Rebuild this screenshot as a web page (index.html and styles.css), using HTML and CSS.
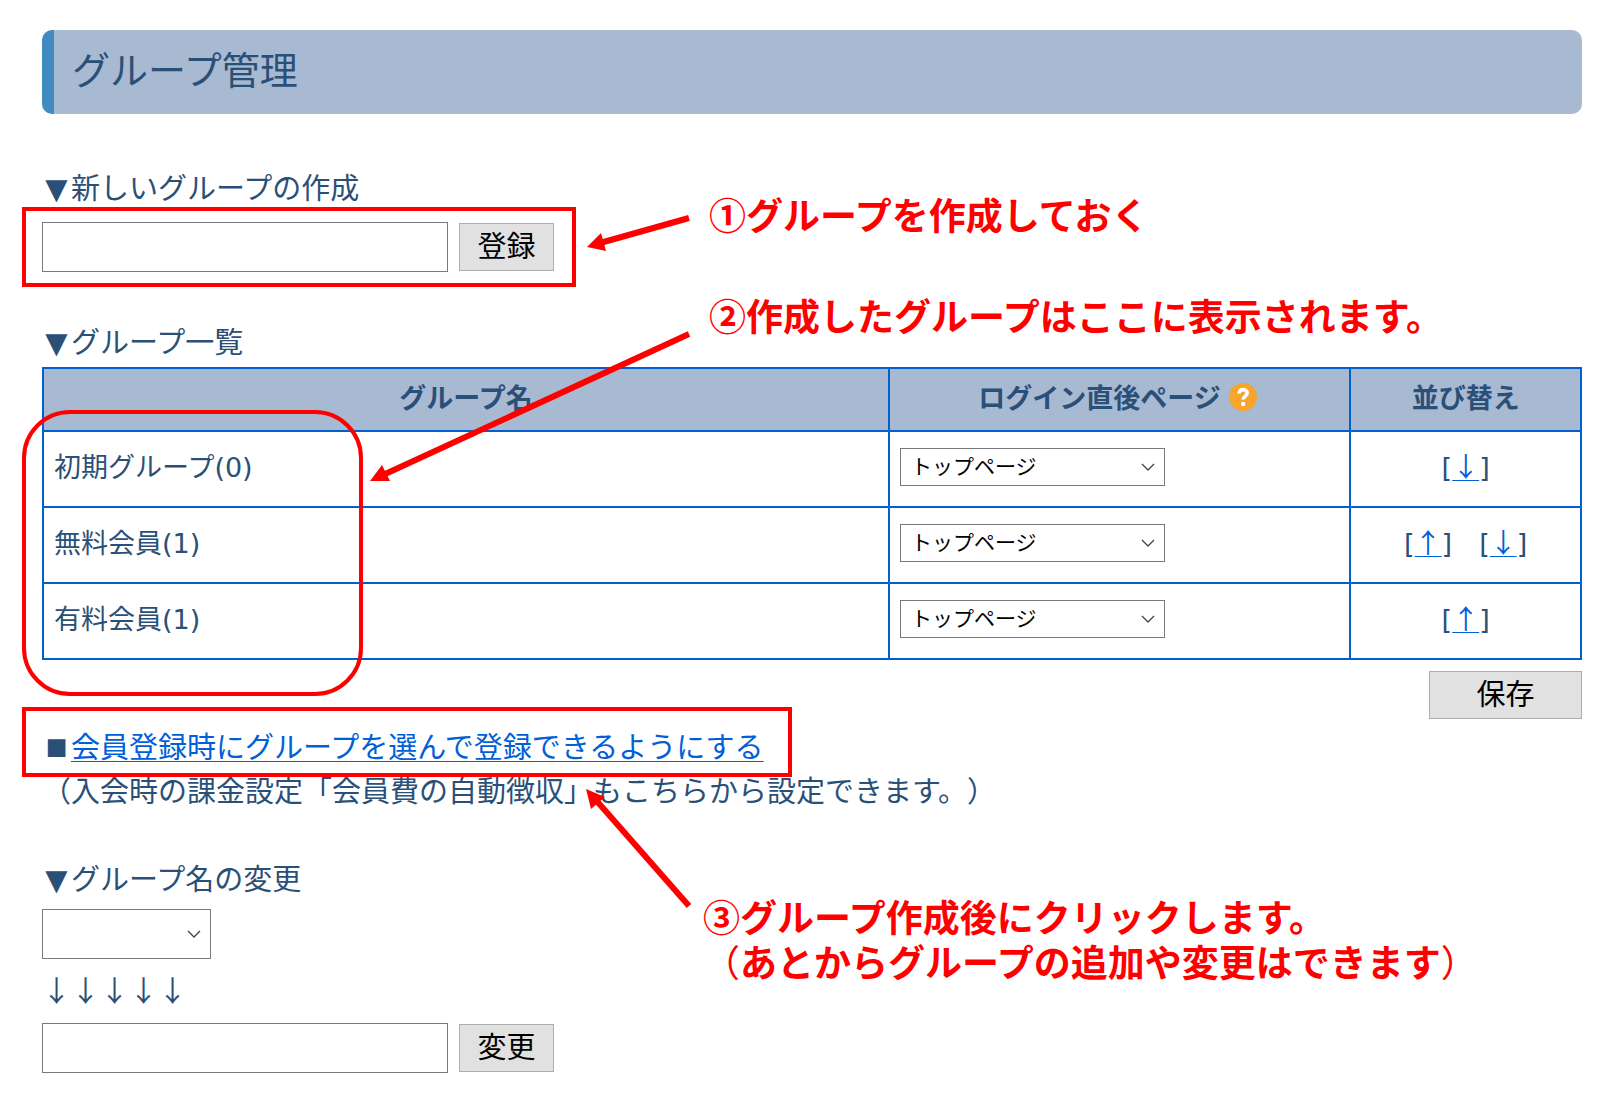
FILE: index.html
```html
<!DOCTYPE html>
<html lang="ja">
<head>
<meta charset="utf-8">
<title>グループ管理</title>
<meta name="viewport" content="width=device-width, initial-scale=1">
<link rel="stylesheet" href="styles.css">
</head>
<body>
<main class="page">
  <h1 class="page-title">グループ管理</h1>

  <form class="section">
    <h2 class="section-title"><label for="new-group"><span class="bullet">▼</span>新しいグループの作成</label></h2>
    <div class="field-row">
      <input class="text-field" id="new-group" type="text">
      <button class="button" type="button">登録</button>
    </div>
  </form>

  <form class="list-section">
    <h2 class="section-title"><span class="bullet">▼</span>グループ一覧</h2>
    <table class="group-table">
      <thead>
        <tr>
          <th class="col-name" scope="col">グループ名</th>
          <th class="col-page" scope="col"><span class="th-help">ログイン直後ページ
            <svg class="help" viewBox="0 0 28 28" role="img" aria-label="ヘルプ"><circle cx="14" cy="14" r="14" fill="#f7a52c"/><path d="M10 10.6C10 7.8 11.8 6.6 14 6.6S18.2 8 18.2 10.2C18.2 13 14.2 13.2 14.2 16.4" fill="none" stroke="#fff" stroke-width="3.6"/><circle cx="14.2" cy="21" r="2.2" fill="#fff"/></svg></span></th>
          <th class="col-order" scope="col">並び替え</th>
        </tr>
      </thead>
      <tbody>
        <tr>
          <td>初期グループ<span class="latin">(0)</span></td>
          <td><select class="select page-select" aria-label="初期グループのログイン直後ページ"><option>トップページ</option></select></td>
          <td class="order"><span class="latin">[</span><a href="#">↓</a><span class="latin">]</span></td>
        </tr>
        <tr>
          <td>無料会員<span class="latin">(1)</span></td>
          <td><select class="select page-select" aria-label="無料会員のログイン直後ページ"><option>トップページ</option></select></td>
          <td class="order"><span class="latin">[</span><a href="#">↑</a><span class="latin">]</span>　<span class="latin">[</span><a href="#">↓</a><span class="latin">]</span></td>
        </tr>
        <tr>
          <td>有料会員<span class="latin">(1)</span></td>
          <td><select class="select page-select" aria-label="有料会員のログイン直後ページ"><option>トップページ</option></select></td>
          <td class="order"><span class="latin">[</span><a href="#">↑</a><span class="latin">]</span></td>
        </tr>
      </tbody>
    </table>
    <div class="save-row"><button class="button save" type="button">保存</button></div>
  </form>

  <p class="note"><span class="bullet bullet-square">■</span><a href="#">会員登録時にグループを選んで登録できるようにする</a><br>（入会時の課金設定「会員費の自動徴収」もこちらから設定できます。）</p>

  <form class="rename">
    <h2 class="section-title"><label for="rename-from"><span class="bullet">▼</span>グループ名の変更</label></h2>
    <select class="select rename-select" id="rename-from"><option></option></select>
    <p class="arrows">↓↓↓↓↓</p>
    <div class="field-row">
      <input class="text-field" type="text" aria-label="新しいグループ名">
      <button class="button" type="button">変更</button>
    </div>
  </form>

  <div class="mark mark-create"></div>
  <div class="mark mark-names"></div>
  <div class="mark mark-link"></div>
  <svg class="pointers" width="720" height="940" viewBox="0 0 720 940" aria-hidden="true">
    <g stroke="#f00" stroke-width="6" fill="#f00">
      <path d="M689 218L600 243"/><path d="M689 334L383 475"/><path d="M689 906L595 799"/>
      <g stroke="none"><path d="M587 247L601 233L606 251Z"/><path d="M370 481L382 465L390 481Z"/><path d="M586 789L605 797L591 809Z"/></g>
    </g>
  </svg>
  <p class="callout callout-1">①グループを作成しておく</p>
  <p class="callout callout-2">②作成したグループはここに表示されます。</p>
  <p class="callout callout-3">③グループ作成後にクリックします。<br><span class="thin">（</span>あとからグループの追加や変更はできます<span class="thin">）</span></p>
</main>
</body>
</html>
```

FILE: styles.css
```css
* { box-sizing: border-box; }

body {
  margin: 0;
  background: #fff;
  color: #2b5078;
  font: 29px/44px "Noto Sans CJK JP", sans-serif;
  text-spacing-trim: space-all;
}

h1, h2, p { margin: 0; font-weight: 400; }

a { color: #0060d8; text-decoration-thickness: 1px; text-underline-offset: 3px; }

.page { position: relative; padding: 30px 35px 31px 42px; }

.page-title {
  padding: 14px 18px 22px;
  border-left: 12px solid #428bc0;
  border-radius: 10px;
  background: #a8b9d2;
  font-size: 38px;
  line-height: 48px;
}

.section { margin-top: 50px; }
.section-title { font-size: 29px; }
.field-row { display: flex; align-items: center; gap: 11px; margin-top: 12px; }
.section .field-row { margin-top: 14px; }

.bullet {
  display: inline-block;
  width: 29px;
  font-family: "DejaVu Sans", sans-serif;
  line-height: 30px;
  text-align: center;
}
.bullet-square { font-size: 23px; line-height: 24px; vertical-align: 4px; }

.text-field {
  width: 406px;
  height: 50px;
  padding: 4px 8px;
  border: 1px solid #7a7a7a;
  background: #fff;
  font: inherit;
}

.button {
  min-width: 95px;
  height: 48px;
  padding: 0 8px 6px;
  border: 1px solid #adadad;
  background: #e1e1e1;
  color: #000;
  font: inherit;
  line-height: 40px;
}

.list-section { margin-top: 46px; }

.group-table {
  width: 100%;
  margin-top: 5px;
  border-collapse: collapse;
  table-layout: fixed;
  font-size: 27px;
}
.group-table th, .group-table td { border: 2px solid #0060d0; padding: 0 10px; }
.group-table th { height: 63px; padding-bottom: 6px; background: #a8b9d2; font-weight: 700; line-height: 40px; }
.group-table td { height: 76px; padding-bottom: 4px; }
.col-name { width: 55%; }
.col-page { width: 30%; }
.col-order { width: 15%; }
.group-table .col-page { padding-right: 14px; }
.th-help { display: inline-flex; align-items: center; gap: 8px; }
.help { width: 28px; height: 28px; }
.group-table .order { text-align: center; }
.latin { font-family: "DejaVu Sans", sans-serif; }

.select {
  display: block;
  appearance: none;
  border: 1px solid #7a7a7a;
  border-radius: 0;
  background: #fff url("data:image/svg+xml,%3Csvg xmlns='http://www.w3.org/2000/svg' width='14' height='8'%3E%3Cpath d='M1 1l6 6 6-6' fill='none' stroke='%23444' stroke-width='1.3'/%3E%3C/svg%3E") no-repeat right 9px center;
  color: #000;
  font: inherit;
}
.page-select { width: 265px; height: 38px; padding: 0 10px 4px; font-size: 21px; line-height: 32px; }
.rename-select { width: 169px; height: 50px; margin-top: 10px; }

.save-row { display: flex; justify-content: flex-end; margin-top: 11px; }
.save { width: 153px; }

.note { margin-top: 4px; }
.rename { margin-top: 44px; }
.arrows { margin-top: 8px; }

/* Red annotations laid over the page */
.mark { position: absolute; border: 4px solid #f00; pointer-events: none; }
.mark-create { left: 22px; top: 207px; width: 554px; height: 80px; }
.mark-names { left: 22px; top: 410px; width: 341px; height: 286px; border-radius: 48px; }
.mark-link { left: 22px; top: 707px; width: 770px; height: 70px; }
.pointers { position: absolute; left: 0; top: 0; pointer-events: none; }
.callout {
  position: absolute;
  color: #f00;
  font-size: 37px;
  font-weight: 700;
  line-height: 45px;
  white-space: nowrap;
}
.callout-1 { left: 709px; top: 192px; }
.callout-2 { left: 709px; top: 293px; }
.callout-3 { left: 703px; top: 894px; }
.thin { font-weight: 400; }
```
